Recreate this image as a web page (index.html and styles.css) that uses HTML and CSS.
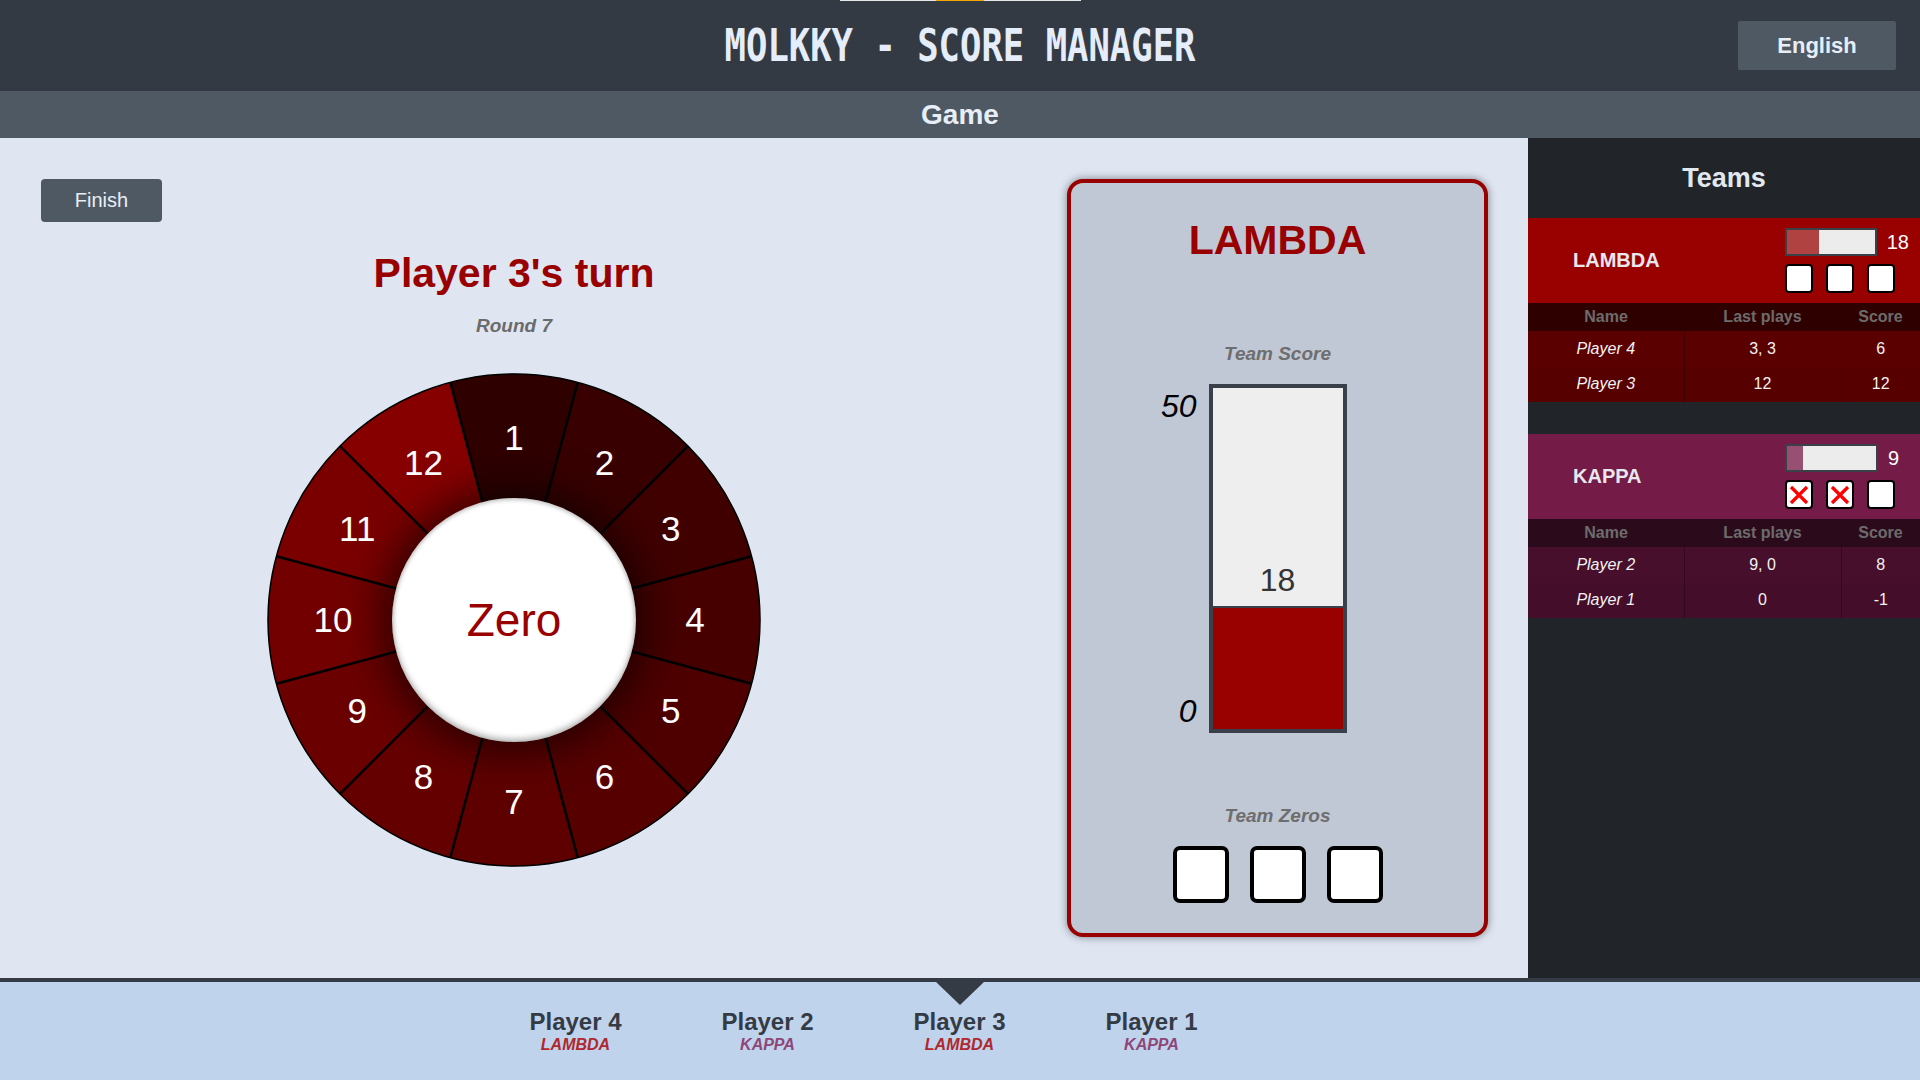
FILE: index.html
```html
<!DOCTYPE html>
<html lang="en">
<head>
<meta charset="utf-8">
<title>Molkky - Score Manager</title>
<link rel="stylesheet" href="styles.css">
</head>
<body>
<header class="topbar">
  <div class="progress"><span class="progress-thumb"></span></div>
  <div class="topbar-side"></div>
  <h1 class="app-title"><span>MOLKKY - SCORE MANAGER</span></h1>
  <div class="topbar-side right"><button class="lang-btn">English</button></div>
</header>
<div class="subbar">Game</div>
<main class="game">
  <section class="board">
    <div class="board-left">
      <button class="finish-btn">Finish</button>
      <h2 class="turn-title">Player 3's turn</h2>
      <p class="round">Round 7</p>
      <div class="wheel">
        <svg class="wheel-svg" width="494" height="494" viewBox="0 0 494 494">
          <path d="M247,247 L183.33,9.38 A246,246 0 0 1 310.67,9.38 Z" fill="#2f0000"/>
          <path d="M247,247 L310.67,9.38 A246,246 0 0 1 420.95,73.05 Z" fill="#380000"/>
          <path d="M247,247 L420.95,73.05 A246,246 0 0 1 484.62,183.33 Z" fill="#400000"/>
          <path d="M247,247 L484.62,183.33 A246,246 0 0 1 484.62,310.67 Z" fill="#470000"/>
          <path d="M247,247 L484.62,310.67 A246,246 0 0 1 420.95,420.95 Z" fill="#4e0000"/>
          <path d="M247,247 L420.95,420.95 A246,246 0 0 1 310.67,484.62 Z" fill="#560000"/>
          <path d="M247,247 L310.67,484.62 A246,246 0 0 1 183.33,484.62 Z" fill="#5e0000"/>
          <path d="M247,247 L183.33,484.62 A246,246 0 0 1 73.05,420.95 Z" fill="#650000"/>
          <path d="M247,247 L73.05,420.95 A246,246 0 0 1 9.38,310.67 Z" fill="#6b0000"/>
          <path d="M247,247 L9.38,310.67 A246,246 0 0 1 9.38,183.33 Z" fill="#720000"/>
          <path d="M247,247 L9.38,183.33 A246,246 0 0 1 73.05,73.05 Z" fill="#7a0000"/>
          <path d="M247,247 L73.05,73.05 A246,246 0 0 1 183.33,9.38 Z" fill="#860000"/>
          <g stroke="#000" stroke-width="2.5">
            <line x1="247" y1="247" x2="183.33" y2="9.38"/>
            <line x1="247" y1="247" x2="310.67" y2="9.38"/>
            <line x1="247" y1="247" x2="420.95" y2="73.05"/>
            <line x1="247" y1="247" x2="484.62" y2="183.33"/>
            <line x1="247" y1="247" x2="484.62" y2="310.67"/>
            <line x1="247" y1="247" x2="420.95" y2="420.95"/>
            <line x1="247" y1="247" x2="310.67" y2="484.62"/>
            <line x1="247" y1="247" x2="183.33" y2="484.62"/>
            <line x1="247" y1="247" x2="73.05" y2="420.95"/>
            <line x1="247" y1="247" x2="9.38" y2="310.67"/>
            <line x1="247" y1="247" x2="9.38" y2="183.33"/>
            <line x1="247" y1="247" x2="73.05" y2="73.05"/>
          </g>
          <circle cx="247" cy="247" r="246" fill="none" stroke="#000" stroke-width="1.5"/>
          <g class="wheel-nums" fill="#fff" text-anchor="middle">
            <text x="247" y="77">1</text>
            <text x="337.5" y="101.5">2</text>
            <text x="403.75" y="168">3</text>
            <text x="428" y="259">4</text>
            <text x="403.75" y="350">5</text>
            <text x="337.5" y="416.25">6</text>
            <text x="247" y="441">7</text>
            <text x="156.5" y="416.25">8</text>
            <text x="90.25" y="350">9</text>
            <text x="66" y="259">10</text>
            <text x="90.25" y="168">11</text>
            <text x="156.5" y="101.5">12</text>
          </g>
        </svg>
        <button class="zero-btn">Zero</button>
      </div>
    </div>
    <div class="team-card">
      <h2 class="card-title">LAMBDA</h2>
      <p class="card-label">Team Score</p>
      <div class="score-gauge">
        <div class="gauge-axis"><span>50</span><span>0</span></div>
        <div class="gauge">
          <span class="gauge-value">18</span>
          <div class="gauge-fill" style="height:36%"></div>
        </div>
      </div>
      <p class="card-label zeros-label">Team Zeros</p>
      <div class="zero-boxes"><span class="zero-box"></span><span class="zero-box"></span><span class="zero-box"></span></div>
    </div>
  </section>
  <aside class="teams">
    <h2 class="teams-title">Teams</h2>
    <div class="team lambda">
      <div class="team-head">
        <span class="team-name">LAMBDA</span>
        <div class="team-status">
          <div class="mini-row">
            <div class="mini-gauge"><div class="mini-fill" style="width:36%"></div></div>
            <span class="mini-score">18</span>
          </div>
          <div class="mini-zeros"><span class="mini-box"></span><span class="mini-box"></span><span class="mini-box"></span></div>
        </div>
      </div>
      <table class="team-table">
        <colgroup><col class="c-name"><col class="c-plays"><col class="c-score"></colgroup>
        <thead><tr><th>Name</th><th>Last plays</th><th>Score</th></tr></thead>
        <tbody>
          <tr><td class="pname">Player 4</td><td>3, 3</td><td>6</td></tr>
          <tr><td class="pname">Player 3</td><td>12</td><td>12</td></tr>
        </tbody>
      </table>
    </div>
    <div class="team kappa">
      <div class="team-head">
        <span class="team-name">KAPPA</span>
        <div class="team-status">
          <div class="mini-row">
            <div class="mini-gauge"><div class="mini-fill" style="width:18%"></div></div>
            <span class="mini-score">9</span>
          </div>
          <div class="mini-zeros">
            <span class="mini-box"><svg viewBox="0 0 24 24" width="24" height="24"><path d="M4 4L20 20M20 4L4 20" stroke="#ff0000" stroke-width="3.2"/></svg></span>
            <span class="mini-box"><svg viewBox="0 0 24 24" width="24" height="24"><path d="M4 4L20 20M20 4L4 20" stroke="#ff0000" stroke-width="3.2"/></svg></span>
            <span class="mini-box"></span>
          </div>
        </div>
      </div>
      <table class="team-table">
        <colgroup><col class="c-name"><col class="c-plays"><col class="c-score"></colgroup>
        <thead><tr><th>Name</th><th>Last plays</th><th>Score</th></tr></thead>
        <tbody>
          <tr><td class="pname">Player 2</td><td>9, 0</td><td>8</td></tr>
          <tr><td class="pname">Player 1</td><td>0</td><td>-1</td></tr>
        </tbody>
      </table>
    </div>
  </aside>
</main>
<footer class="queue">
  <div class="queue-item"><div class="q-name">Player 4</div><div class="q-team lambda-text">LAMBDA</div></div>
  <div class="queue-item"><div class="q-name">Player 2</div><div class="q-team kappa-text">KAPPA</div></div>
  <div class="queue-item current"><div class="q-name">Player 3</div><div class="q-team lambda-text">LAMBDA</div></div>
  <div class="queue-item"><div class="q-name">Player 1</div><div class="q-team kappa-text">KAPPA</div></div>
</footer>
</body>
</html>
```

FILE: styles.css
```css
* { box-sizing: border-box; }
html, body { margin: 0; padding: 0; }
body {
  width: 1920px;
  height: 1080px;
  overflow: hidden;
  font-family: "Liberation Sans", Arial, sans-serif;
  background: #dfe6f2;
}

/* ---------- header ---------- */
.topbar {
  position: relative;
  height: 91px;
  background: #343a43;
  display: grid;
  grid-template-columns: 1fr auto 1fr;
  align-items: center;
}
.progress {
  position: absolute;
  top: 0;
  left: 840px;
  width: 241px;
  height: 1px;
  background: #e6e6e6;
}
.progress-thumb {
  position: absolute;
  top: 0;
  left: 96px;
  width: 48px;
  height: 1px;
  background: #f5a500;
}
.app-title {
  margin: 0;
  font-family: "DejaVu Sans Mono", "Liberation Mono", monospace;
  font-weight: bold;
  font-size: 45px;
  line-height: 91px;
  color: #e4edf9;
  white-space: nowrap;
}
.app-title span {
  display: inline-block;
  transform: scaleX(0.79);
}
.topbar-side.right {
  display: flex;
  justify-content: flex-end;
  padding-right: 24px;
}
.lang-btn {
  width: 158px;
  height: 49px;
  border: 0;
  border-radius: 2px;
  background: #4f5964;
  color: #e8eef8;
  font-family: "Liberation Sans", Arial, sans-serif;
  font-weight: bold;
  font-size: 22px;
  padding: 0;
}
.subbar {
  height: 47px;
  background: #4f5964;
  color: #e8eef8;
  text-align: center;
  font-weight: bold;
  font-size: 28px;
  line-height: 47px;
}

/* ---------- main ---------- */
.game {
  display: flex;
  height: 840px;
}
.board {
  flex: 1;
  display: grid;
  grid-template-columns: 1028px 421px;
  column-gap: 39px;
  padding: 41px 40px 41px 0;
  background: #dfe6f2;
}
.board-left {
  text-align: center;
}
.finish-btn {
  display: block;
  margin-left: 41px;
  width: 121px;
  height: 43px;
  border: 0;
  border-radius: 4px;
  background: #4f5964;
  color: #e8eef8;
  font-family: "Liberation Sans", Arial, sans-serif;
  font-size: 20px;
  padding: 0;
}
.turn-title {
  margin: 27px 0 0;
  font-size: 41px;
  line-height: 48px;
  font-weight: bold;
  color: #990000;
}
.round {
  margin: 18px 0 0;
  font-size: 19px;
  line-height: 22px;
  font-style: italic;
  font-weight: bold;
  color: #6b6b6b;
}
.wheel {
  position: relative;
  width: 494px;
  height: 494px;
  margin: 36px auto 0;
}
.wheel-svg { display: block; }
.wheel-nums text {
  font-family: "Liberation Sans", Arial, sans-serif;
  font-size: 35px;
}
.zero-btn {
  position: absolute;
  left: 125px;
  top: 125px;
  width: 244px;
  height: 244px;
  border: 0;
  border-radius: 50%;
  background: #fff;
  color: #990000;
  font-family: "Liberation Sans", Arial, sans-serif;
  font-size: 46px;
  padding: 0;
  box-shadow: 0 0 40px 10px rgba(0, 0, 0, 0.6), inset 0 -3px 6px rgba(0, 0, 0, 0.3), inset 0 2px 4px rgba(0, 0, 0, 0.2);
}

/* ---------- team card ---------- */
.team-card {
  border: 4px solid #990000;
  border-radius: 16px;
  background: #c0c7d5;
  box-shadow: 0 0 8px rgba(0, 0, 0, 0.45);
  text-align: center;
}
.card-title {
  margin: 33px 0 0;
  font-size: 41px;
  line-height: 48px;
  font-weight: bold;
  color: #990000;
}
.card-label {
  margin: 79px 0 0;
  font-size: 19px;
  line-height: 22px;
  font-style: italic;
  font-weight: bold;
  color: #6e6e6e;
}
.score-gauge {
  margin-top: 19px;
  height: 349px;
  display: grid;
  grid-template-columns: 1fr 138px 1fr;
  column-gap: 12px;
}
.gauge-axis {
  display: flex;
  flex-direction: column;
  justify-content: space-between;
  align-items: flex-end;
  padding: 4px 0;
  font-size: 32px;
  line-height: 36px;
  font-style: italic;
  color: #000;
}
.gauge {
  display: flex;
  flex-direction: column;
  justify-content: flex-end;
  border: 4px solid #3a4049;
  background: #eeeeee;
}
.gauge-value {
  font-size: 32px;
  line-height: 36px;
  color: #333;
  margin-bottom: 8px;
}
.gauge-fill {
  background: #990000;
  border-top: 2px solid #3a4049;
}
.zeros-label { margin-top: 72px; }
.zero-boxes {
  margin-top: 19px;
  display: flex;
  justify-content: center;
  gap: 21px;
}
.zero-box {
  width: 56px;
  height: 57px;
  border: 4px solid #000;
  border-radius: 7px;
  background: #fff;
}

/* ---------- teams sidebar ---------- */
.teams {
  width: 392px;
  background: #212428;
}
.teams-title {
  margin: 0;
  text-align: center;
  font-size: 27px;
  line-height: 80px;
  font-weight: bold;
  color: #e2e8f0;
}
.team + .team { margin-top: 32px; }
.team-head {
  height: 85px;
  display: flex;
  align-items: center;
  padding-left: 45px;
}
.lambda .team-head { background: #990000; }
.kappa .team-head { background: #741b47; }
.team-name {
  flex: 1;
  font-size: 20px;
  font-weight: bold;
  color: #e8e8ee;
}
.team-status {
  width: 124px;
  margin-right: 11px;
  display: flex;
  flex-direction: column;
  gap: 8px;
}
.mini-row {
  display: flex;
  align-items: center;
  gap: 10px;
}
.mini-gauge {
  width: 93px;
  height: 28px;
  border: 2px solid #3b4048;
  background: #ececec;
}
.mini-fill { height: 100%; }
.lambda .mini-fill { background: #b14242; }
.kappa .mini-fill { background: #985072; }
.mini-score {
  font-size: 20px;
  color: #fff;
  line-height: 20px;
}
.mini-zeros {
  display: flex;
  gap: 13px;
}
.mini-box {
  width: 28px;
  height: 29px;
  border: 2px solid #000;
  border-radius: 4px;
  background: #fff;
  display: flex;
  align-items: center;
  justify-content: center;
}
.mini-box svg { display: block; }
.team-table {
  width: 100%;
  border-collapse: collapse;
  table-layout: fixed;
  font-size: 16px;
}
.c-name { width: 156px; }
.c-plays { width: 157px; }
.c-score { width: 79px; }
.team-table th {
  height: 28px;
  padding: 0;
  font-weight: bold;
  color: #6c6c6c;
  text-align: center;
}
.lambda .team-table th { background: #2e0000; }
.kappa .team-table th { background: #2b0a1b; }
.team-table td {
  height: 35.5px;
  padding: 0;
  text-align: center;
  color: #f2f2f2;
}
.team-table td + td { border-left: 1px solid rgba(0, 0, 0, 0.3); }
.lambda .team-table td { background: #5a0000; }
.lambda .team-table tr + tr td { background: #560000; }
.kappa .team-table td { background: #470f2b; }
.kappa .team-table tr + tr td { background: #440d29; }
.team-table td.pname { font-style: italic; }

/* ---------- footer queue ---------- */
.queue {
  height: 102px;
  border-top: 4px solid #343b44;
  background: #bfd3ec;
  display: flex;
  justify-content: center;
  padding-right: 193px;
}
.queue-item {
  position: relative;
  width: 192px;
  padding-top: 26px;
  text-align: center;
}
.queue-item.current::before {
  content: "";
  position: absolute;
  top: 0;
  left: 50%;
  margin-left: -24px;
  border-left: 24px solid transparent;
  border-right: 24px solid transparent;
  border-top: 23px solid #343b44;
}
.q-name {
  font-size: 24px;
  line-height: 28px;
  font-weight: bold;
  color: #343b44;
}
.q-team {
  font-size: 16px;
  line-height: 18px;
  font-weight: bold;
  font-style: italic;
}
.lambda-text { color: #b0282d; }
.kappa-text { color: #8e4676; }
```
